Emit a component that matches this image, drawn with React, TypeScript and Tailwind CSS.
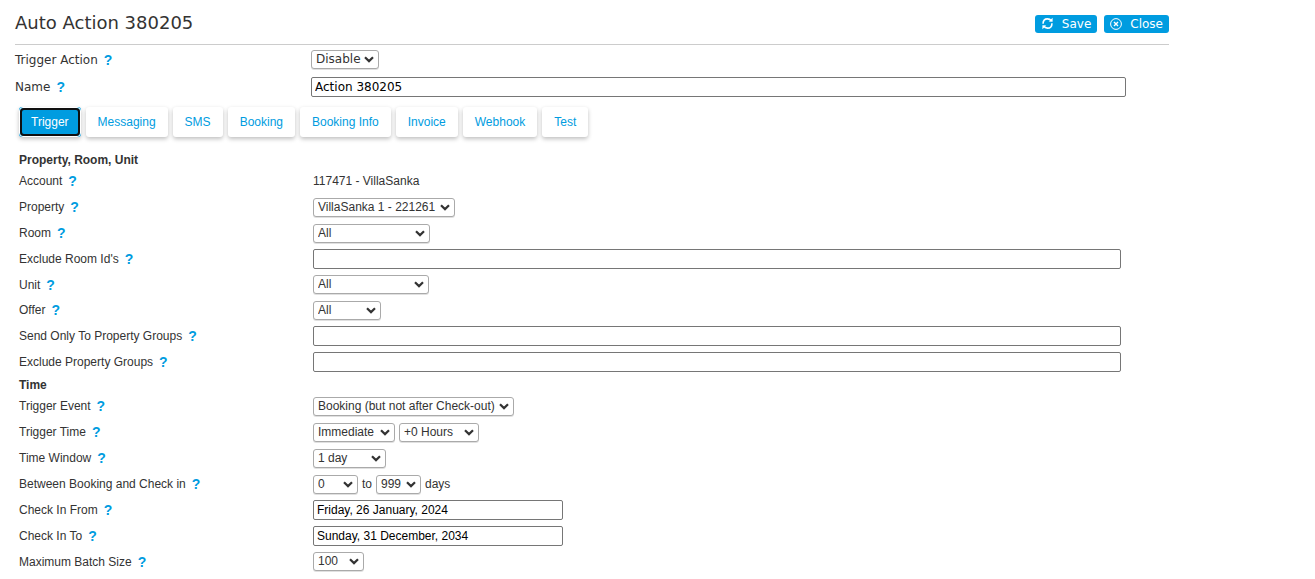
import React, { useState } from "react";

const textField =
  "h-5 rounded-[2px] border border-[#767676] bg-white px-[3px] text-black outline-none";

function Select({ id, label, value, width }: { id?: string; label?: string; value: string; width: string }) {
  return (
    <span className={`relative inline-flex ${width}`}>
      <select
        id={id}
        aria-label={label}
        className="h-[19px] w-full appearance-none rounded-[3px] border border-[#aaa] bg-white pl-1 leading-[17px] text-[#333] shadow-[0_1px_0_rgba(0,0,0,0.12)] outline-none"
      >
        <option>{value}</option>
      </select>
      <svg viewBox="0 0 10 7" className="pointer-events-none absolute top-[6px] right-[5px] h-[7px] w-[10px]" fill="none" stroke="#333" strokeWidth="2.2">
        <path d="M1 1.2 5 5.1 9 1.2" />
      </svg>
    </span>
  );
}

function Label({ id, text }: { id?: string; text: string }) {
  return (
    <div className="flex items-center gap-[6px]">
      {id ? <label htmlFor={id}>{text}</label> : <span>{text}</span>}
      <a href="#help" aria-label={`Help: ${text}`} className="font-['Liberation_Sans',sans-serif] text-[14px] leading-4 font-bold text-[#009ce0]">
        ?
      </a>
    </div>
  );
}

function Row({ id, label, compact, children }: { id?: string; label: string; compact?: boolean; children: React.ReactNode }) {
  return (
    <div className={`grid grid-cols-[294px_minmax(0,1fr)] items-center ${compact ? "h-[25px]" : "h-[26px]"}`}>
      <Label id={id} text={label} />
      <div className="flex items-center gap-1">{children}</div>
    </div>
  );
}

function Heading({ children }: { children: React.ReactNode }) {
  return <h2 className="h-[19px] pt-[3px] leading-4 font-bold">{children}</h2>;
}

const tabs = ["Trigger", "Messaging", "SMS", "Booking", "Booking Info", "Invoice", "Webhook", "Test"];

export default function App() {
  const [active, setActive] = useState("Trigger");
  return (
    <main className="mr-[146px] ml-[15px] font-['Liberation_Sans',sans-serif] text-[12px] text-[#333]">
      <div className="font-['DejaVu_Sans',sans-serif]">
        <header className="flex h-[45px] items-center justify-between border-b border-[#ccc] pt-[3px]">
          <h1 className="pb-[2px] text-[18px]">Auto Action 380205</h1>
          <div className="flex gap-[7px]">
            <button className="flex h-[18px] items-center gap-2 rounded-[3px] bg-[#009ce0] px-[6px] text-white">
              <svg viewBox="0 0 14 14" className="h-[13px] w-[13px]" fill="none" stroke="currentColor" strokeWidth="1.7">
                <path d="M2.2 7.4C2.2 4 4 2 7 2c1.700 0 3.200.8 4.300 2.200M11.800 6.600C11.800 10 10 12 7 12c-1.700 0-3.200-.8-4.300-2.200" />
                <path d="M12.500.8v4.400l-4.200-.3zM1.500 13.200V8.800l4.200.3z" fill="currentColor" stroke="none" />
              </svg>
              Save
            </button>
            <button className="flex h-[18px] items-center gap-2 rounded-[3px] bg-[#009ce0] px-[6px] text-white">
              <svg viewBox="0 0 12 12" className="h-3 w-3" fill="none" stroke="currentColor" strokeWidth="1">
                <circle cx="6" cy="6" r="5.4" />
                <path d="m4 4 4 4M8 4 4 8" strokeWidth="1.4" />
              </svg>
              Close
            </button>
          </div>
        </header>
        <div className="grid h-[27px] grid-cols-[296px_minmax(0,1fr)] items-center pt-[2px]">
          <Label id="action" text="Trigger Action" />
          <Select id="action" value="Disable" width="w-[68px]" />
        </div>
        <div className="grid h-[27px] grid-cols-[296px_minmax(0,1fr)] items-center pt-[2px] pr-[43px]">
          <Label id="name" text="Name" />
          <input id="name" defaultValue="Action 380205" className={`${textField} w-full`} />
        </div>
      </div>

      <nav className="flex gap-[5px] pt-2 pl-1">
        {tabs.map((tab) => (
          <button
            key={tab}
            onClick={() => setActive(tab)}
            className={`h-[30px] rounded-[3px] px-3 shadow-[0_2px_4px_rgba(0,0,0,0.25)] ${
              active === tab
                ? "relative bg-[#009ce0] text-white before:absolute before:inset-0 before:rounded-[4px] before:border before:border-white after:absolute after:inset-px after:rounded-[4px] after:border-2 after:border-[#101010]"
                : "bg-white text-[#009ce0]"
            }`}
          >
            {tab}
          </button>
        ))}
      </nav>

      <form className="pt-3 pr-12 pl-1">
        <Heading>Property, Room, Unit</Heading>
        <Row label="Account">117471 - VillaSanka</Row>
        <Row id="property" label="Property"><Select id="property" value="VillaSanka 1 - 221261" width="w-[142px]" /></Row>
        <Row id="room" label="Room"><Select id="room" value="All" width="w-[117px]" /></Row>
        <Row id="exroom" label="Exclude Room Id's"><input id="exroom" className={`${textField} w-full`} /></Row>
        <Row id="unit" label="Unit" compact><Select id="unit" value="All" width="w-[116px]" /></Row>
        <Row id="offer" label="Offer"><Select id="offer" value="All" width="w-[68px]" /></Row>
        <Row id="groups" label="Send Only To Property Groups"><input id="groups" className={`${textField} w-full`} /></Row>
        <Row id="exgroups" label="Exclude Property Groups" compact><input id="exgroups" className={`${textField} w-full`} /></Row>
        <Heading>Time</Heading>
        <Row id="event" label="Trigger Event"><Select id="event" value="Booking (but not after Check-out)" width="w-[201px]" /></Row>
        <Row id="time" label="Trigger Time">
          <Select id="time" value="Immediate" width="w-[82px]" />
          <Select label="Hour offset" value="+0 Hours" width="w-[80px]" />
        </Row>
        <Row id="window" label="Time Window"><Select id="window" value="1 day" width="w-[73px]" /></Row>
        <Row id="between" label="Between Booking and Check in">
          <Select id="between" value="0" width="w-[45px]" />
          <span>to</span>
          <Select label="Maximum days" value="999" width="w-[45px]" />
          <span>days</span>
        </Row>
        <Row id="from" label="Check In From"><input id="from" defaultValue="Friday, 26 January, 2024" className={`${textField} w-[250px]`} /></Row>
        <Row id="to" label="Check In To"><input id="to" defaultValue="Sunday, 31 December, 2034" className={`${textField} w-[250px]`} /></Row>
        <Row id="batch" label="Maximum Batch Size" compact><Select id="batch" value="100" width="w-[51px]" /></Row>
      </form>
    </main>
  );
}
